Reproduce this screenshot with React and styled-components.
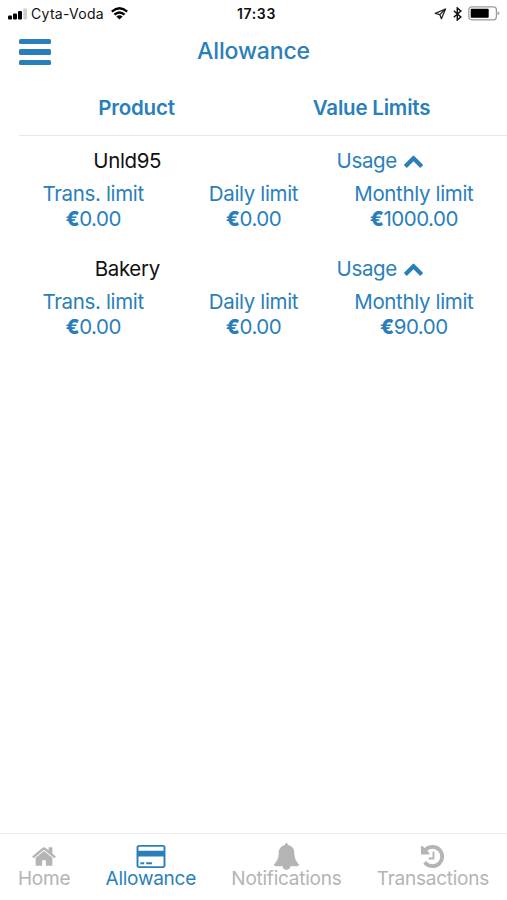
import React from "react";
import styled, { createGlobalStyle } from "styled-components";

const limits = [
    { product: "Unld95", trans: "0.00", daily: "0.00", monthly: "1000.00" },
    { product: "Bakery", trans: "0.00", daily: "0.00", monthly: "90.00" },
];

export default function App() {
    return (
        <Screen>
            <GlobalStyle />
            <StatusBar>
                <StatusLeft>
                    <SignalIcon />
                    <Carrier>Cyta-Voda</Carrier>
                    <WifiIcon />
                </StatusLeft>
                <Clock>17:33</Clock>
                <StatusRight>
                    <LocationIcon />
                    <BluetoothIcon />
                    <BatteryIcon />
                </StatusRight>
            </StatusBar>

            <TitleBar>
                <MenuButton aria-label="Menu">
                    <MenuLine />
                    <MenuLine />
                    <MenuLine />
                </MenuButton>
                <Title>Allowance</Title>
            </TitleBar>

            <TableHeader>
                <HeaderCell>Product</HeaderCell>
                <HeaderCell>Value Limits</HeaderCell>
            </TableHeader>

            <Content>
                {limits.map((item) => (
                    <ProductBlock key={item.product}>
                        <ProductRow>
                            <ProductName>{item.product}</ProductName>
                            <UsageToggle>
                                Usage
                                <ChevronIcon />
                            </UsageToggle>
                        </ProductRow>
                        <LimitsRow>
                            <Limit title="Trans. limit" value={item.trans} />
                            <Limit title="Daily limit" value={item.daily} />
                            <Limit title="Monthly limit" value={item.monthly} />
                        </LimitsRow>
                    </ProductBlock>
                ))}
            </Content>

            <TabBar>
                <Tab><HomeIcon /><TabLabel>Home</TabLabel></Tab>
                <Tab $active><CardIcon /><TabLabel>Allowance</TabLabel></Tab>
                <Tab><BellIcon /><TabLabel>Notifications</TabLabel></Tab>
                <Tab><HistoryIcon /><TabLabel>Transactions</TabLabel></Tab>
            </TabBar>
        </Screen>
    )
}

function Limit({ title, value }) {
    return (
        <LimitCell>
            <div>{title}</div>
            <LimitValue><Euro>€</Euro>{value}</LimitValue>
        </LimitCell>
    )
}

// Icons
function SignalIcon() {
    return (
        <svg width="20" height="12" viewBox="0 0 20 12">
            <rect x="0" y="7.5" width="4" height="4" rx="1" />
            <rect x="5" y="5.5" width="4" height="6" rx="1" />
            <rect x="10" y="3" width="4" height="8.5" rx="1" />
            <rect x="15.3" y="0.5" width="3.7" height="11" rx="1" fill="#cfcfcf" />
        </svg>
    )
}

function WifiIcon() {
    return (
        <svg width="17" height="13" viewBox="0 0 17 13" fill="none" stroke="#000" strokeWidth="2.3">
            <path d="M0.8 4.7Q8.5 -2.1 16.2 4.7" />
            <path d="M3.4 7.7Q8.5 3.2 13.6 7.7" />
            <path d="M8.5 12.6L5.4 9.5Q8.5 7.1 11.6 9.5Z" fill="#000" stroke="none" />
        </svg>
    )
}

function LocationIcon() {
    return (
        <svg width="13" height="12" viewBox="0 0 13 12" fill="none" stroke="#222" strokeWidth="1.3" strokeLinejoin="round">
            <path d="M11.5 1L1.3 5.4L5.8 6.6L7.4 10.7Z" />
            <path d="M11.5 1L5.8 6.6" />
        </svg>
    )
}

function BluetoothIcon() {
    return (
        <svg width="9" height="14" viewBox="0 0 9 14" fill="none" stroke="#111" strokeWidth="1.5">
            <path d="M0.8 3.8L7.8 10L4.3 13V1L7.8 4L0.8 10.2" />
        </svg>
    )
}

function BatteryIcon() {
    return (
        <svg width="32" height="15" viewBox="0 0 32 15">
            <rect x="0.8" y="0.8" width="27.6" height="13" rx="3" fill="#fff" stroke="#999" strokeWidth="1.2" />
            <rect x="2.7" y="2.8" width="18" height="9" rx="1" />
            <path d="M29.6 5.2Q33 7.3 29.6 9.4Z" fill="#999" />
        </svg>
    )
}

function ChevronIcon() {
    return (
        <svg width="21" height="21" viewBox="0 0 1792 1792" fill="currentColor">
            <path d="M1683 1331l-166 165q-19 19-45 19t-45-19l-531-531-531 531q-19 19-45 19t-45-19l-166-165q-19-19-19-45.5t19-45.5l742-741q19-19 45-19t45 19l742 741q19 19 19 45.5t-19 45.5z" />
        </svg>
    )
}

function HomeIcon() {
    return (
        <svg width="26" height="26" viewBox="0 0 1792 1792" fill="currentColor">
            <path d="M1472 992v480q0 26-19 45t-45 19h-384v-384h-256v384h-384q-26 0-45-19t-19-45v-480q0-1 .5-3t.5-3l575-474 575 474q1 2 1 6zm223-69l-62 74q-8 9-21 11h-3q-13 0-21-7l-692-577-692 577q-12 8-24 7-13-2-21-11l-62-74q-8-10-7-23.5t11-21.5l719-599q32-26 76-26t76 26l244 204v-195q0-14 9-23t23-9h192q14 0 23 9t9 23v408l219 182q10 8 11 21.5t-7 23.5z" />
        </svg>
    )
}

function CardIcon() {
    return (
        <svg width="30" height="28" viewBox="0 0 1920 1792" fill="currentColor">
            <path d="M1760 128q66 0 113 47t47 113v1216q0 66-47 113t-113 47h-1600q-66 0-113-47t-47-113v-1216q0-66 47-113t113-47h1600zm-1600 128q-13 0-22.5 9.5t-9.5 22.5v224h1664v-224q0-13-9.5-22.5t-22.5-9.5h-1600zm1600 1280q13 0 22.5-9.5t9.5-22.5v-608h-1664v608q0 13 9.5 22.5t22.5 9.5h1600zm-1504-128v-128h256v128h-256zm384 0v-128h384v128h-384z" />
        </svg>
    )
}

function BellIcon() {
    return (
        <svg width="27" height="27" viewBox="0 0 1792 1792" fill="currentColor">
            <path d="M1728 1408q0 52-38 90t-90 38h-448q0 106-75 181t-181 75-181-75-75-181h-448q-52 0-90-38t-38-90q50-42 91-88t85-119.5 74.5-158.5 50-206 19.5-260q0-152 117-282.5t307-158.5q-8-19-8-39 0-40 28-68t68-28 68 28 28 68q0 20-8 39 190 28 307 158.5t117 282.5q0 139 19.5 260t50 206 74.5 158.5 85 119.5 91 88z" />
        </svg>
    )
}

function HistoryIcon() {
    return (
        <svg width="27" height="27" viewBox="0 0 1792 1792" fill="currentColor">
            <path d="M1664 896q0 156-61 298t-164 245-245 164-298 61q-172 0-327-72.5t-264-204.5q-7-10-6.5-22.5t8.5-20.5l137-138q10-9 25-9 16 2 23 12 73 95 179 147t225 52q104 0 198.5-40.5t163.5-109.5 109.5-163.5 40.5-198.5-40.5-198.5-109.5-163.5-163.5-109.5-198.5-40.5q-98 0-188 35.5t-160 101.5l137 138q31 30 14 69-17 40-59 40h-448q-26 0-45-19t-19-45v-448q0-42 40-59 39-17 69 14l130 129q107-101 244.5-156.5t284.5-55.5q156 0 298 61t245 164 164 245 61 298zm-640-288v448q0 14-9 23t-23 9h-320q-14 0-23-9t-9-23v-64q0-14 9-23t23-9h224v-352q0-14 9-23t23-9h64q14 0 23 9t9 23z" />
        </svg>
    )
}

const GlobalStyle = createGlobalStyle`
    * {
        box-sizing: border-box;
    }

    body {
        margin: 0;
        background: #ffffff;
    }
`

const Screen = styled.div`
    display: flex;
    flex-direction: column;

    width: 507px;
    height: 900px;
    overflow: hidden;

    font-family: Inter, "Liberation Sans", sans-serif;
    font-size: 20.5px;
    line-height: 25px;
    letter-spacing: -0.35px;
    color: #2a7fba;
    background: #ffffff;

    svg {
        display: block;
        flex: none;
    }
`

const StatusBar = styled.div`
    display: grid;
    grid-template-columns: 1fr auto 1fr;
    align-items: center;

    height: 27px;
    padding: 0 7px 0 8px;

    font-size: 14px;
    color: #111111;
`

const StatusLeft = styled.div`
    display: flex;
    align-items: center;
`

const Carrier = styled.span`
    margin: 0 7px 0 3px;
    letter-spacing: 0.3px;
`

const Clock = styled.span`
    padding-left: 5px;

    font-weight: 600;
    letter-spacing: 0.6px;
`

const StatusRight = styled.div`
    display: flex;
    justify-content: flex-end;
    align-items: center;
    gap: 6px;
`

const TitleBar = styled.header`
    display: grid;
    grid-template-columns: 32px 1fr 32px;
    align-items: center;

    height: 48px;
    padding: 0 19px;
`

const MenuButton = styled.button`
    display: flex;
    flex-direction: column;
    gap: 5px;

    padding: 2px 0 0;
    border: 0;
    background: none;
`

const MenuLine = styled.span`
    width: 32px;
    height: 5.5px;
    border-radius: 1.5px;
    background: #2a7fba;
`

const Title = styled.h1`
    margin: 0;

    font-weight: 500;
    font-size: 23px;
    line-height: 28px;
    letter-spacing: -0.15px;
    text-align: center;
`

const TableHeader = styled.div`
    display: grid;
    grid-template-columns: 1fr 1fr;
    align-items: center;

    height: 61px;
    margin-left: 19px;
    padding: 5px 18px 0 0;
    border-bottom: 1px solid #e8e8e8;
`

const HeaderCell = styled.div`
    font-weight: 600;
    letter-spacing: -0.2px;
    text-align: center;
`

const Content = styled.main`
    flex: 1;
    padding-top: 12px;
`

const ProductBlock = styled.section`
    height: 107.5px;
`

const ProductRow = styled.div`
    display: grid;
    grid-template-columns: 1fr 1fr;
`

const ProductName = styled.div`
    padding-left: 1px;

    color: #111111;
    text-align: center;
`

const UsageToggle = styled.div`
    display: flex;
    justify-content: center;
    align-items: center;
    gap: 6px;
`

const LimitsRow = styled.div`
    display: grid;
    grid-template-columns: repeat(3, 1fr);

    padding: 8px 13px 0;
`

const LimitCell = styled.div`
    text-align: center;
`

const LimitValue = styled.div`
    letter-spacing: -0.5px;
`

const Euro = styled.span`
    font-weight: 800;
`

const TabBar = styled.nav`
    display: flex;
    justify-content: space-between;

    height: 67px;
    padding: 9px 18px 0 18px;
    border-top: 1px solid #eeeeee;
`

const Tab = styled.div`
    display: flex;
    flex-direction: column;
    align-items: center;

    color: ${(props) => (props.$active ? "#2a7fba" : "#b4b4b4")};

    svg {
        height: 27px;
    }
`

const TabLabel = styled.span`
    margin-top: -1px;

    font-size: 19px;
    line-height: 20px;
    letter-spacing: -0.25px;
`
